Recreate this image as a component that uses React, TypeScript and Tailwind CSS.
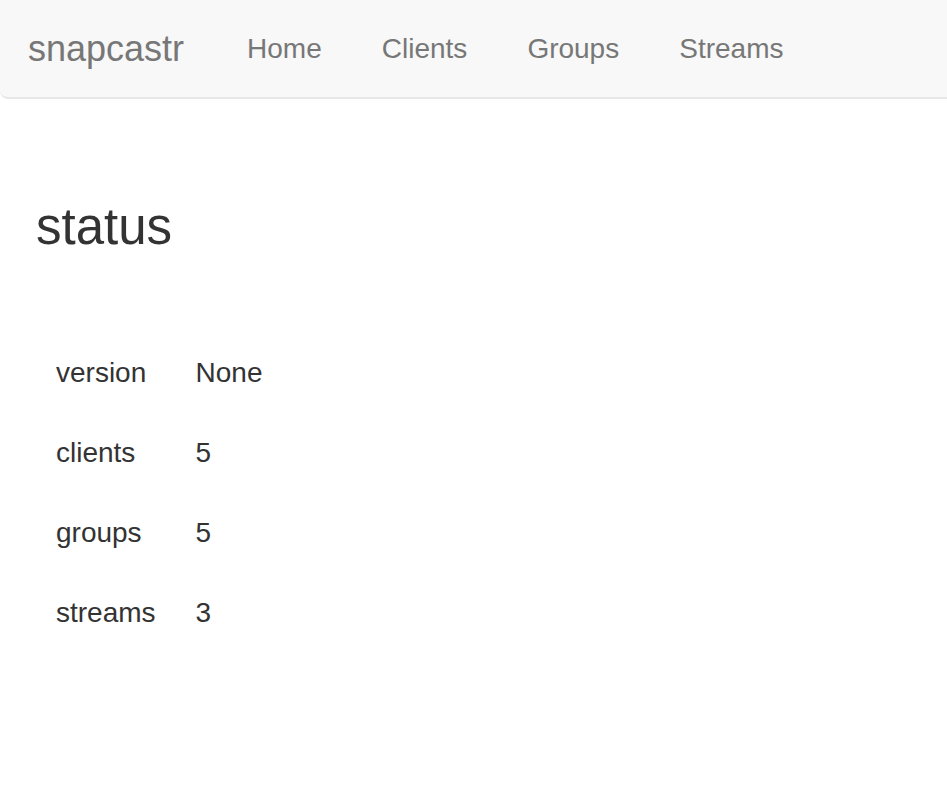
const navLinks = ["Home", "Clients", "Groups", "Streams"];

const stats = [
  { label: "version", value: "None" },
  { label: "clients", value: "5" },
  { label: "groups", value: "5" },
  { label: "streams", value: "3" },
];

function Navbar() {
  return (
    <nav className="flex items-start h-[99px] bg-[#f8f8f8] border-b-2 border-[#e7e7e7] rounded-bl-lg">
      <a
        href="#"
        className="pl-[28px] pr-[33px] pt-[29px] text-[36px] leading-[40px] text-[#777]"
      >
        snapcastr
      </a>
      <ul className="flex">
        {navLinks.map((link) => (
          <li key={link}>
            <a
              href="#"
              className="block px-[30px] pt-[29px] text-[28px] leading-[40px] text-[#777]"
            >
              {link}
            </a>
          </li>
        ))}
      </ul>
    </nav>
  );
}

export default function App() {
  return (
    <div className="min-h-screen bg-white text-[#333] font-['Liberation_Sans',Arial,sans-serif]">
      <Navbar />
      <main className="px-[36px]">
        <h3 className="mt-[100px] text-[51px] leading-[55px] font-medium">status</h3>
        <table className="mt-[79px] text-[28px] leading-[40px]">
          <tbody>
            {stats.map((s) => (
              <tr key={s.label}>
                <td className="p-[20px]">{s.label}</td>
                <td className="p-[20px]">{s.value}</td>
              </tr>
            ))}
          </tbody>
        </table>
      </main>
    </div>
  );
}
